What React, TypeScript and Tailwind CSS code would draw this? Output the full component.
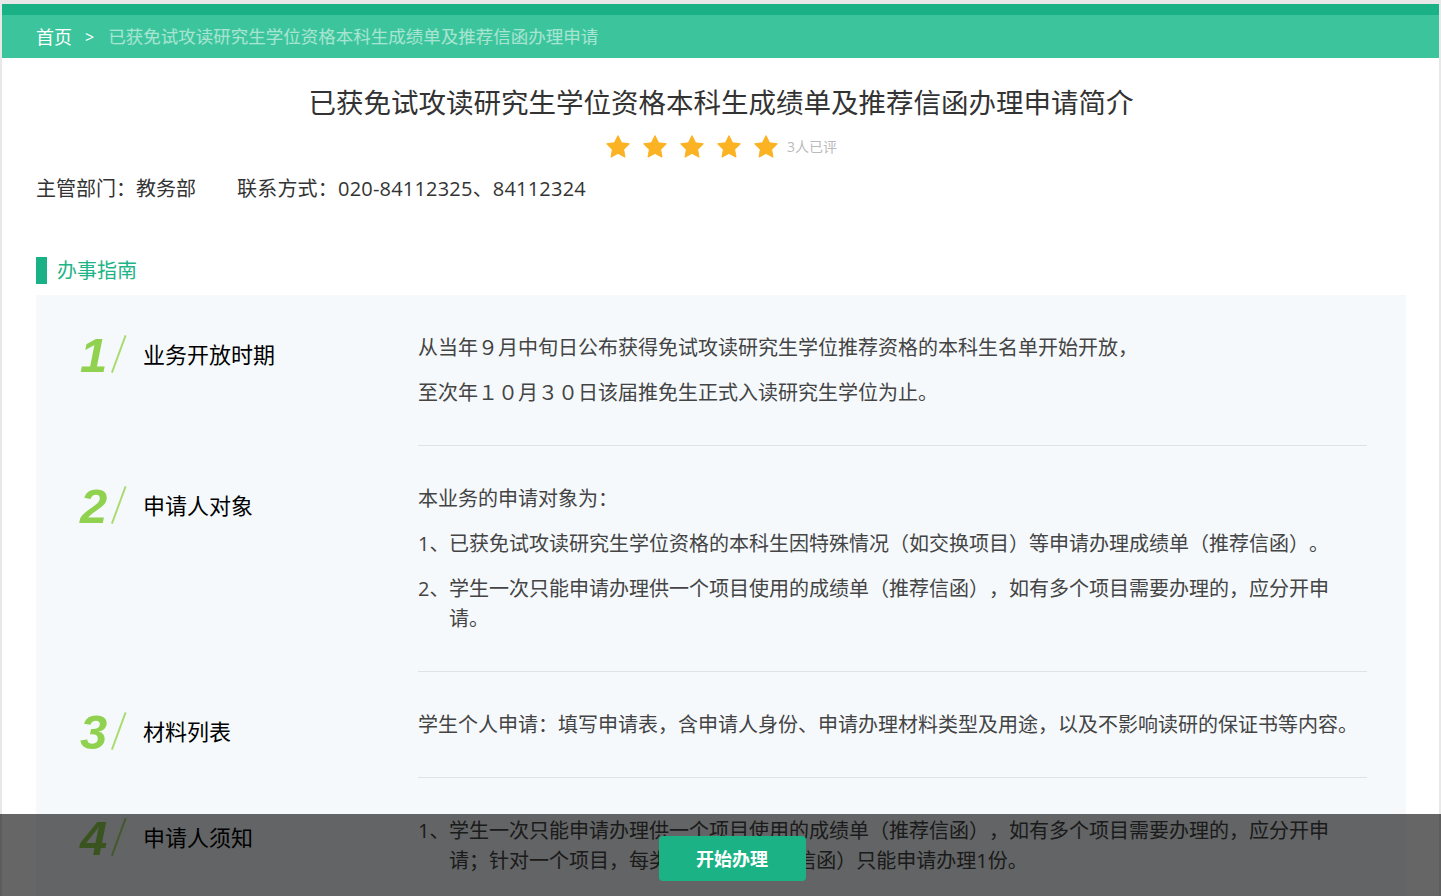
import React from "react";

const Star = () => (
  <svg width="26" height="26" viewBox="0 0 24 24" className="block">
    <path
      d="M12 1.6l3.2 6.5 7.1 1-5.15 5 1.22 7.1L12 17.85 5.63 21.2l1.22-7.1-5.15-5 7.1-1z"
      fill="#fbb324"
      stroke="#fbb324"
      strokeWidth="1"
      strokeLinejoin="round"
    />
  </svg>
);

const Num = ({ n }: { n: string }) => (
  <div className="flex items-end w-[48px] h-[40px] shrink-0">
    <span className="font-['Liberation_Sans',Arial,sans-serif] italic font-bold text-[49px] leading-[40px] text-[#90d24f] w-[28px] -mb-[1px]">
      {n}
    </span>
    <svg width="20" height="40" viewBox="0 0 20 40" className="block ml-[1px]">
      <line x1="18" y1="1" x2="4" y2="39" stroke="#a9dc6e" strokeWidth="2" />
    </svg>
  </div>
);

type Item = { n: string; title: string; body: React.ReactNode };

const P = ({ children }: { children: React.ReactNode }) => (
  <p className="leading-[30px]">{children}</p>
);

const Li = ({ k, children }: { k: string; children: React.ReactNode }) => (
  <div className="flex leading-[30px]">
    <span className="w-[31px] shrink-0">{k}</span>
    <span className="flex-1">{children}</span>
  </div>
);

const items: Item[] = [
  {
    n: "1",
    title: "业务开放时期",
    body: (
      <>
        <P>从当年９月中旬日公布获得免试攻读研究生学位推荐资格的本科生名单开始开放，</P>
        <P>至次年１０月３０日该届推免生正式入读研究生学位为止。</P>
      </>
    ),
  },
  {
    n: "2",
    title: "申请人对象",
    body: (
      <>
        <P>本业务的申请对象为：</P>
        <Li k="1、">已获免试攻读研究生学位资格的本科生因特殊情况（如交换项目）等申请办理成绩单（推荐信函）。</Li>
        <Li k="2、">学生一次只能申请办理供一个项目使用的成绩单（推荐信函），如有多个项目需要办理的，应分开申请。</Li>
      </>
    ),
  },
  {
    n: "3",
    title: "材料列表",
    body: (
      <>
        <P>学生个人申请：填写申请表，含申请人身份、申请办理材料类型及用途，以及不影响读研的保证书等内容。</P>
      </>
    ),
  },
  {
    n: "4",
    title: "申请人须知",
    body: (
      <>
        <Li k="1、">学生一次只能申请办理供一个项目使用的成绩单（推荐信函），如有多个项目需要办理的，应分开申请；针对一个项目，每类（成绩单/推荐信函）只能申请办理1份。</Li>
      </>
    ),
  },
  {
    n: "5",
    title: "办理流程",
    body: (
      <>
        <P>网上提交申请，教务部审核通过后，按通知时间到教务部领取办理结果。</P>
      </>
    ),
  },
];

export default function App() {
  return (
    <div className="min-h-screen bg-[#e8e8e8] pt-[4px] pl-[2px] pr-[2px] font-['Open_Sans','Noto_Sans_CJK_SC',sans-serif] [text-spacing-trim:space-all]">
      <div className="bg-white pb-[140px]">
        {/* header bars */}
        <div className="h-[11px] bg-[#1bb186]" />
        <div className="h-[43px] bg-[#3cc59c] flex items-center pl-[34px] text-[18px] leading-none">
          <span className="text-white">首页</span>
          <span className="text-white ml-[13px] mr-[14px] text-[16px]">&gt;</span>
          <span className="text-white/55 text-[17.5px]">已获免试攻读研究生学位资格本科生成绩单及推荐信函办理申请</span>
        </div>

        <div className="pl-[34px] pr-[33px]">
          <h1 className="mt-[25px] text-center text-[27.5px] leading-[40px] text-[#333] font-normal">
            已获免试攻读研究生学位资格本科生成绩单及推荐信函办理申请简介
          </h1>
          <div className="mt-[11px] flex items-center justify-center">
            <div className="flex gap-[11px]">
              <Star />
              <Star />
              <Star />
              <Star />
              <Star />
            </div>
            <span className="ml-[8px] text-[14px] text-[#bbbbbb] leading-[26px]">3人已评</span>
          </div>
          <div className="mt-[14px] text-[20px] leading-[30px] text-[#333] flex">
            <span className="mr-[41px]">主管部门：教务部</span>
            <span className="tracking-[0.2px]">联系方式：020-84112325、84112324</span>
          </div>

          <div className="mt-[53px] flex items-center h-[27px]">
            <div className="w-[11px] h-[27px] bg-[#1bb186]" />
            <span className="ml-[10px] text-[20px] text-[#1fb488] leading-[27px]">办事指南</span>
          </div>

          <div className="mt-[11px] bg-[#f5f9fc] pr-[39px]">
            {items.map((it) => (
              <div key={it.n} className="flex">
                <div className="w-[382px] shrink-0 pl-[44px] pt-[39px] flex items-start">
                  <div className="flex items-center">
                    <Num n={it.n} />
                    <span className="ml-[15px] text-[22px] leading-[30px] text-black">{it.title}</span>
                  </div>
                </div>
                <div className="flex-1 pt-[38px] pb-[37px] border-b border-[#dfe3e8] text-[20px] text-[#444] flex flex-col gap-[15px]">
                  {it.body}
                </div>
              </div>
            ))}
          </div>
        </div>
      </div>

      <div className="fixed bottom-0 left-0 right-0 h-[82px] bg-black/60 flex justify-center pt-[22px] pl-[23px]">
        <button className="w-[147px] h-[45px] rounded-[4px] bg-[#1bb386] text-white font-bold text-[18px] leading-none">
          开始办理
        </button>
      </div>
    </div>
  );
}
